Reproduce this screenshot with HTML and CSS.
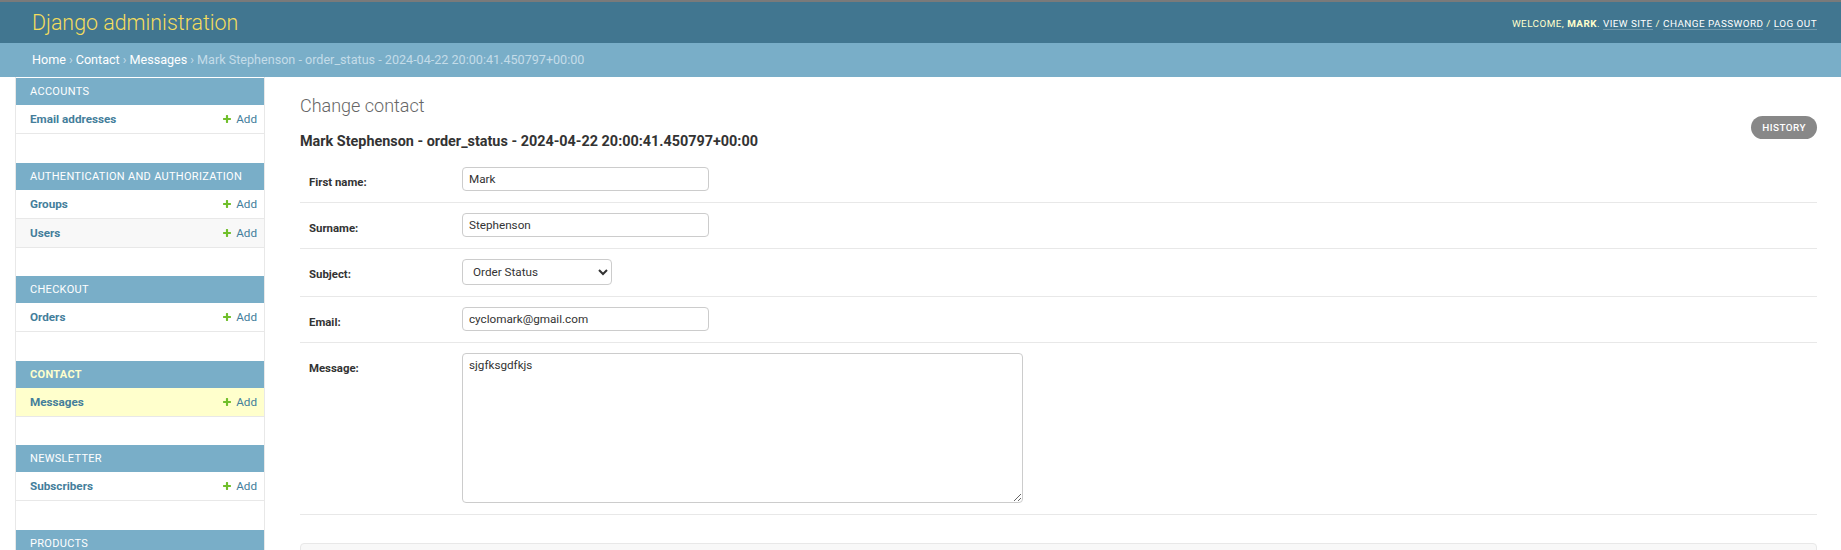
FILE: index.html
```html
<!DOCTYPE html>
<html lang="en">
<head>
<meta charset="utf-8">
<title>Change contact | Django site admin</title>
<link rel="stylesheet" href="styles.css">
</head>
<body>
<header class="header">
  <div class="branding"><a class="site-name" href="#">Django administration</a></div>
  <div class="user-tools">
    Welcome, <strong>Mark</strong>. <a href="#">View site</a> / <a href="#">Change password</a> / <a href="#">Log out</a>
  </div>
</header>
<nav class="breadcrumbs">
  <a href="#">Home</a><span class="sep">›</span><a href="#">Contact</a><span class="sep">›</span><a href="#">Messages</a><span class="sep">›</span><span class="crumb-current">Mark Stephenson - order_status - 2024-04-22 20:00:41.450797+00:00</span>
</nav>
<div class="main">
  <div class="toggle-nav"></div>
  <aside class="sidebar">
    <section class="module">
      <div class="caption">Accounts</div>
      <div class="nav-row"><a class="model" href="#">Email addresses</a><a class="addlink" href="#"><svg class="plus" viewBox="0 0 1792 1792"><path d="M1600 796v192q0 40-28 68t-68 28h-416v416q0 40-28 68t-68 28h-192q-40 0-68-28t-28-68v-416h-416q-40 0-68-28t-28-68v-192q0-40 28-68t68-28h416v-416q0-40 28-68t68-28h192q40 0 68 28t28 68v416h416q40 0 68 28t28 68z"/></svg>Add</a></div>
    </section>
    <section class="module">
      <div class="caption">Authentication and Authorization</div>
      <div class="nav-row"><a class="model" href="#">Groups</a><a class="addlink" href="#"><svg class="plus" viewBox="0 0 1792 1792"><path d="M1600 796v192q0 40-28 68t-68 28h-416v416q0 40-28 68t-68 28h-192q-40 0-68-28t-28-68v-416h-416q-40 0-68-28t-28-68v-192q0-40 28-68t68-28h416v-416q0-40 28-68t68-28h192q40 0 68 28t28 68v416h416q40 0 68 28t28 68z"/></svg>Add</a></div>
      <div class="nav-row alt"><a class="model" href="#">Users</a><a class="addlink" href="#"><svg class="plus" viewBox="0 0 1792 1792"><path d="M1600 796v192q0 40-28 68t-68 28h-416v416q0 40-28 68t-68 28h-192q-40 0-68-28t-28-68v-416h-416q-40 0-68-28t-28-68v-192q0-40 28-68t68-28h416v-416q0-40 28-68t68-28h192q40 0 68 28t28 68v416h416q40 0 68 28t28 68z"/></svg>Add</a></div>
    </section>
    <section class="module">
      <div class="caption">Checkout</div>
      <div class="nav-row"><a class="model" href="#">Orders</a><a class="addlink" href="#"><svg class="plus" viewBox="0 0 1792 1792"><path d="M1600 796v192q0 40-28 68t-68 28h-416v416q0 40-28 68t-68 28h-192q-40 0-68-28t-28-68v-416h-416q-40 0-68-28t-28-68v-192q0-40 28-68t68-28h416v-416q0-40 28-68t68-28h192q40 0 68 28t28 68v416h416q40 0 68 28t28 68z"/></svg>Add</a></div>
    </section>
    <section class="module current-app">
      <div class="caption">Contact</div>
      <div class="nav-row current"><a class="model" href="#">Messages</a><a class="addlink" href="#"><svg class="plus" viewBox="0 0 1792 1792"><path d="M1600 796v192q0 40-28 68t-68 28h-416v416q0 40-28 68t-68 28h-192q-40 0-68-28t-28-68v-416h-416q-40 0-68-28t-28-68v-192q0-40 28-68t68-28h416v-416q0-40 28-68t68-28h192q40 0 68 28t28 68v416h416q40 0 68 28t28 68z"/></svg>Add</a></div>
    </section>
    <section class="module">
      <div class="caption">Newsletter</div>
      <div class="nav-row"><a class="model" href="#">Subscribers</a><a class="addlink" href="#"><svg class="plus" viewBox="0 0 1792 1792"><path d="M1600 796v192q0 40-28 68t-68 28h-416v416q0 40-28 68t-68 28h-192q-40 0-68-28t-28-68v-416h-416q-40 0-68-28t-28-68v-192q0-40 28-68t68-28h416v-416q0-40 28-68t68-28h192q40 0 68 28t28 68v416h416q40 0 68 28t28 68z"/></svg>Add</a></div>
    </section>
    <section class="module">
      <div class="caption">Products</div>
    </section>
  </aside>
  <main class="content">
    <h1 class="page-title">Change contact</h1>
    <ul class="object-tools"><li><a class="historylink" href="#">History</a></li></ul>
    <h2 class="object-name">Mark Stephenson - order_status - 2024-04-22 20:00:41.450797+00:00</h2>
    <form class="change-form">
      <fieldset class="fieldset">
        <div class="form-row">
          <label class="field-label" for="id_first_name">First name:</label>
          <input class="text-input" id="id_first_name" type="text" value="Mark">
        </div>
        <div class="form-row">
          <label class="field-label" for="id_surname">Surname:</label>
          <input class="text-input" id="id_surname" type="text" value="Stephenson">
        </div>
        <div class="form-row">
          <label class="field-label" for="id_subject">Subject:</label>
          <select class="select-input" id="id_subject"><option>Order Status</option><option>General</option></select>
        </div>
        <div class="form-row">
          <label class="field-label" for="id_email">Email:</label>
          <input class="text-input" id="id_email" type="email" value="cyclomark@gmail.com">
        </div>
        <div class="form-row">
          <label class="field-label" for="id_message">Message:</label>
          <textarea class="textarea-input" id="id_message">sjgfksgdfkjs</textarea>
        </div>
      </fieldset>
      <div class="submit-row"></div>
    </form>
  </main>
</div>
</body>
</html>
```
FILE: styles.css
```css
* { box-sizing: border-box; }

html, body {
  margin: 0;
  padding: 0;
}

body {
  font-family: Roboto, "Liberation Sans", Arial, sans-serif;
  color: #333;
  background: #fff;
  font-size: 12.6px;
}

a { text-decoration: none; }

.header {
  display: flex;
  align-items: center;
  justify-content: space-between;
  height: 43px;
  padding: 0 24px 0 32px;
  background: #417690;
  border-top: 2px solid #7a7a7a;
}

.site-name {
  color: #f5dd5d;
  font-size: 21.4px;
  font-weight: 300;
  line-height: 26px;
}

.user-tools {
  color: #ffc;
  font-size: 9.9px;
  letter-spacing: 0.45px;
  text-transform: uppercase;
  padding-top: 2px;
}

.user-tools strong {
  font-weight: 700;
  color: #ffc;
}

.user-tools a {
  color: #fff;
  border-bottom: 1px solid rgba(255, 255, 255, 0.25);
}

.breadcrumbs {
  height: 34px;
  line-height: 34px;
  padding: 0 32px;
  background: #79aec8;
  color: #c4dce8;
  font-size: 12.6px;
}

.breadcrumbs a { color: #fff; }

.breadcrumbs .sep {
  color: #c4dce8;
  margin: 0 3px;
}

.main {
  display: flex;
  align-items: stretch;
  min-height: 473px;
}

.toggle-nav {
  flex: 0 0 16px;
  border-right: 1px solid #e8e8e8;
}

.sidebar {
  flex: 0 0 249px;
  border-right: 1px solid #e8e8e8;
  padding-top: 1px;
}

.module {
  margin-bottom: 28.5px;
}

.caption {
  height: 27px;
  line-height: 27px;
  padding-left: 14px;
  background: #79aec8;
  color: #fff;
  font-size: 11px;
  letter-spacing: 0.3px;
  text-transform: uppercase;
}

.current-app .caption {
  color: #ffc;
  font-weight: 700;
}

.nav-row {
  display: flex;
  align-items: center;
  justify-content: space-between;
  height: 29px;
  padding: 0 7px 0 14px;
  border-bottom: 1px solid #e8e8e8;
  font-size: 11.7px;
}

.nav-row.alt { background: #f8f8f8; }

.nav-row.current { background: #ffc; }

.model {
  color: #447e9b;
  font-weight: 700;
}

.addlink {
  display: flex;
  align-items: center;
  color: #447e9b;
}

.plus {
  width: 10px;
  height: 10px;
  margin-right: 4px;
  fill: #70bf2b;
}

.content {
  flex: 1;
  padding: 18px 24px 0 35px;
  min-width: 0;
}

.page-title {
  margin: 0;
  font-size: 18px;
  font-weight: 300;
  line-height: 21px;
  color: #666;
}

.object-tools {
  float: right;
  list-style: none;
  margin: 0;
  padding: 0;
}

.historylink {
  display: block;
  padding: 3px 11px;
  line-height: 17px;
  background: #888;
  color: #fff;
  font-size: 9.9px;
  font-weight: 500;
  letter-spacing: 0.45px;
  text-transform: uppercase;
  border-radius: 15px;
}

.object-name {
  margin: 17px 0 0;
  font-size: 14.4px;
  font-weight: 700;
  line-height: 17px;
  color: #333;
}

.change-form { margin: 0; }

.fieldset {
  margin: 7px 0 0;
  padding: 0;
  border: 0;
  min-width: 0;
}

.form-row {
  display: flex;
  align-items: flex-start;
  padding: 10px 9px 11px;
  border-bottom: 1px solid #e8e8e8;
}

.field-label {
  flex: 0 0 153px;
  padding-top: 8px;
  line-height: 14px;
  font-size: 11.4px;
  font-weight: 700;
  color: #333;
}

.text-input,
.select-input,
.textarea-input {
  font-family: Roboto, "Liberation Sans", Arial, sans-serif;
  font-size: 11.7px;
  color: #333;
  background: #fff;
  border: 1px solid #ccc;
  border-radius: 4px;
}

.text-input {
  width: 247px;
  height: 24px;
  padding: 3px 6px;
}

.select-input {
  width: 150px;
  height: 26px;
  padding: 0 4px 0 6px;
}

.textarea-input {
  width: 561px;
  height: 150px;
  padding: 4px 6px;
  resize: both;
}

.submit-row {
  margin-top: 28px;
  height: 40px;
  background: #f8f8f8;
  border: 1px solid #e8e8e8;
  border-radius: 4px;
}
```
